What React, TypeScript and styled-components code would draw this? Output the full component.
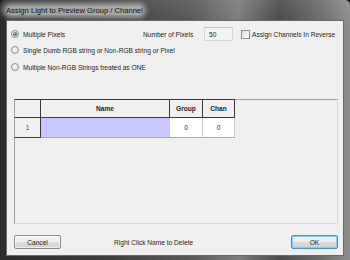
import React from 'react';
import styled, { createGlobalStyle } from 'styled-components';

const GlobalStyle = createGlobalStyle`
  html, body {
    margin: 0;
    padding: 0;
    background: #1a1a1a;
  }
  * {
    box-sizing: border-box;
  }
`;

const Window = styled.div`
  width: 350px;
  height: 260px;
  display: flex;
  flex-direction: column;
  font-family: 'Liberation Sans', Arial, sans-serif;
  font-size: 6.6px;
  color: #1e1e1e;
  background:
    linear-gradient(180deg, rgba(255, 255, 255, 0.08) 0%, rgba(0, 0, 0, 0) 20px),
    linear-gradient(90deg, #2c2c2c 0%, #3d3d3d 30%, #5a5a5a 55%, #7d7d7d 68%, #4c4c4c 80%, #6e6e6e 92%, #8f8f8f 100%);
  border-radius: 5px 5px 0 0;
  overflow: hidden;
`;

const TitleBar = styled.div`
  height: 20px;
  flex: none;
  display: flex;
  align-items: center;
  padding-left: 6px;
`;

// the aero title gets a soft light halo behind the text
const TitleText = styled.span`
  font-size: 7.6px;
  color: #111;
  line-height: 9px;
  border-radius: 5px;
  background: rgba(200, 200, 200, 0.75);
  box-shadow: 0 0 5px 3px rgba(200, 200, 200, 0.7);
`;

const Client = styled.div`
  flex: 1;
  margin: 0 6px 4px 6px;
  background: #f0f0f0;
  border: 1px solid #6a6a6a;
  padding: 6px 6px 0 4px;
  display: flex;
  flex-direction: column;
`;

const Row = styled.div<{ $top?: number }>`
  display: flex;
  align-items: center;
  height: 14px;
  margin-top: ${p => p.$top ?? 0}px;
`;

const Option = styled.label<{ $width?: number }>`
  display: flex;
  align-items: center;
  gap: 4px;
  width: ${p => (p.$width ? `${p.$width}px` : 'auto')};
  white-space: nowrap;
`;

const Radio = styled.span<{ $checked?: boolean }>`
  width: 8px;
  height: 8px;
  border-radius: 50%;
  border: 1px solid #8e8f8f;
  background: radial-gradient(circle at 40% 35%, #ffffff 0%, #e6e6e6 60%, #cfcfcf 100%);
  display: flex;
  align-items: center;
  justify-content: center;
  &::after {
    content: '';
    display: ${p => (p.$checked ? 'block' : 'none')};
    width: 4px;
    height: 4px;
    border-radius: 50%;
    background: radial-gradient(circle at 40% 35%, #8fb6d8 0%, #2b5b86 70%, #1c3f66 100%);
  }
`;

const FieldLabel = styled.span`
  width: 61px;
  white-space: nowrap;
`;

const NumberInput = styled.div`
  width: 29px;
  height: 14px;
  border: 1px solid #d6d6d6;
  border-top-color: #c4c4c4;
  background: #f3f3f3;
  display: flex;
  align-items: center;
  padding-left: 4px;
`;

const Check = styled.span`
  width: 9px;
  height: 9px;
  margin-left: 8px;
  border: 1px solid #8e8f8f;
  background: linear-gradient(135deg, #dcdcdc 0%, #f4f4f4 60%, #ffffff 100%);
`;

const CheckText = styled.span`
  margin-left: 2px;
  white-space: nowrap;
`;

const GridPanel = styled.div`
  margin: 25px 0 0 3px;
  width: 324px;
  height: 125px;
  border: 1px solid #a0a0a0;
  border-right-color: #d8d8d8;
  border-bottom-color: #d8d8d8;
  background: #f0f0f0;
`;

const Table = styled.div`
  display: grid;
  grid-template-columns: 27px 129px 33px 32px;
  grid-template-rows: 19px 20px;
  margin: -1px 0 0 -1px;
`;

const HeadCell = styled.div<{ $corner?: boolean }>`
  display: flex;
  align-items: center;
  justify-content: center;
  font-weight: bold;
  background: #f0f0f0;
  border-top: 1px solid #3a3a3a;
  border-right: 1px solid #3a3a3a;
  border-bottom: 1px solid #3a3a3a;
  border-left: ${p => (p.$corner ? '1px solid #a0a0a0' : 'none')};
`;

const RowHead = styled.div`
  display: flex;
  align-items: center;
  justify-content: center;
  background: #f0f0f0;
  border-left: 1px solid #a0a0a0;
  border-right: 1px solid #3a3a3a;
  border-bottom: 1px solid #3a3a3a;
  color: #4a3a7a;
`;

const Cell = styled.div<{ $selected?: boolean }>`
  display: flex;
  align-items: center;
  justify-content: center;
  background: ${p => (p.$selected ? '#c8c8ff' : '#ffffff')};
  border-right: 1px solid #c8c8c8;
  border-bottom: 1px solid #a8a8a8;
`;

const BottomBar = styled.div`
  display: flex;
  align-items: center;
  margin: 11px 0 0 3px;
  width: 324px;
`;

const Button = styled.div<{ $default?: boolean }>`
  width: 47px;
  height: 14px;
  display: flex;
  align-items: center;
  justify-content: center;
  border: 1px solid ${p => (p.$default ? '#3c96d0' : '#8a8a8a')};
  border-radius: 2px;
  background: linear-gradient(180deg, #f4f4f4 0%, #ececec 48%, #dddddd 52%, #d0d0d0 100%);
  box-shadow: inset 0 0 0 1px ${p => (p.$default ? '#7fd0f5' : 'rgba(255,255,255,0.6)')};
`;

const Hint = styled.span`
  margin-left: 53px;
  flex: 1;
`;

const App: React.FC = () => {
  return (
    <>
      <GlobalStyle />
      <Window>
        <TitleBar>
          <TitleText>Assign Light to Preview Group / Channel</TitleText>
        </TitleBar>
        <Client>
          <Row>
            <Option $width={132}>
              <Radio $checked />
              Multiple Pixels
            </Option>
            <FieldLabel>Number of Pixels</FieldLabel>
            <NumberInput>50</NumberInput>
            <Check />
            <CheckText>Assign Channels In Reverse</CheckText>
          </Row>
          <Row $top={2}>
            <Option>
              <Radio />
              Single Dumb RGB string or Non-RGB string or Pixel
            </Option>
          </Row>
          <Row $top={3}>
            <Option>
              <Radio />
              Multiple Non-RGB Strings treated as ONE
            </Option>
          </Row>
          <GridPanel>
            <Table>
              <HeadCell $corner />
              <HeadCell>Name</HeadCell>
              <HeadCell>Group</HeadCell>
              <HeadCell>Chan</HeadCell>
              <RowHead>1</RowHead>
              <Cell $selected />
              <Cell>0</Cell>
              <Cell>0</Cell>
            </Table>
          </GridPanel>
          <BottomBar>
            <Button>Cancel</Button>
            <Hint>Right Click Name to Delete</Hint>
            <Button $default>OK</Button>
          </BottomBar>
        </Client>
      </Window>
    </>
  );
};

export default App;
